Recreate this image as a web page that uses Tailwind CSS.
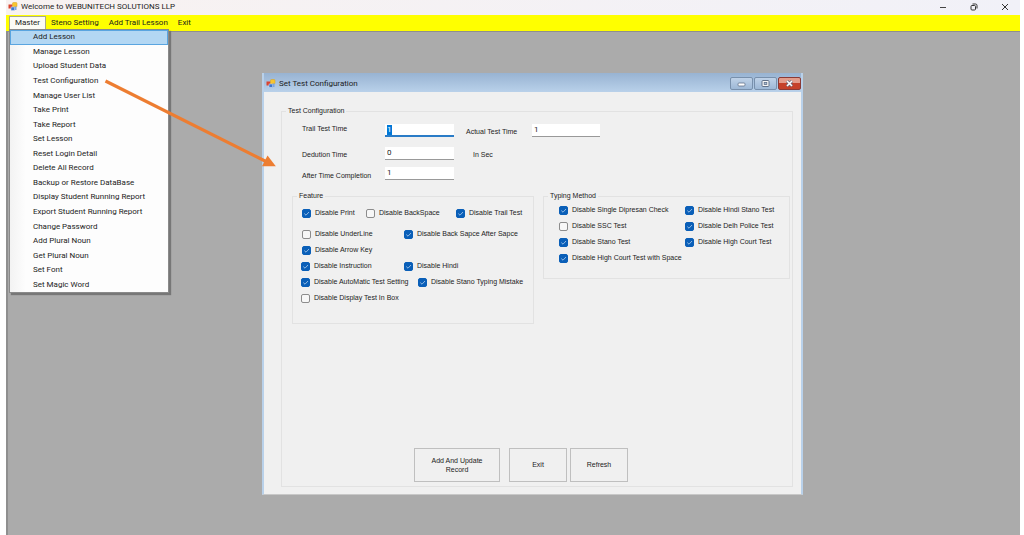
<!DOCTYPE html>
<html lang="en">
<head>
<meta charset="utf-8">
<title>Welcome to WEBUNITECH SOLUTIONS LLP</title>
<script src="https://cdn.jsdelivr.net/npm/@tailwindcss/browser@4"></script>
</head>
<body class="bg-white font-[Roboto,sans-serif] text-[8px] leading-[10px] text-[#1c1c1c]">
<svg class="hidden">
  <symbol id="app-icon" viewBox="0 0 20 18">
    <rect x="1" y="5" width="8" height="8" fill="#d9432f"/>
    <rect x="9" y="1" width="9" height="9" rx="2" fill="#f7c52f" stroke="#d9a01c"/>
    <rect x="6" y="10" width="7" height="7" fill="#3f78cf" stroke="#dfe8f8"/>
    <rect x="13" y="9" width="4" height="7" fill="#7ba4e2"/>
  </symbol>
  <symbol id="tick" viewBox="0 0 9 9"><path d="M2.3 4.6 4 6.2 7 3" fill="none" stroke="#b5d2ef" stroke-width="0.8"/></symbol>
</svg>
<div class="relative mr-1 ml-1.5 flex min-h-screen flex-col">
  <header class="flex h-[15px] items-center bg-linear-to-r from-[#f8f2f1] to-[#f1f1f8] pb-0.5 pl-0.5">
    <svg class="h-[9px] w-[10px]"><use href="#app-icon"/></svg>
    <h1 class="ml-[3px]">Welcome to WEBUNITECH SOLUTIONS LLP</h1>
    <div class="ml-auto flex gap-[21px] pr-2.5">
      <button aria-label="Minimize"><svg class="size-2.5" viewBox="0 0 10 10"><path d="M2 5.500h6" stroke="#444"/></svg></button>
      <button aria-label="Restore"><svg class="size-2.5" viewBox="0 0 10 10" fill="none" stroke="#333"><rect x="2" y="3.500" width="4.500" height="4.500" rx="1"/><path d="M3.500 2H6.500a1.500 1.500 0 0 1 1.500 1.500V6.500"/></svg></button>
      <button aria-label="Close"><svg class="size-2.5" viewBox="0 0 10 10"><path d="m2 2 6 6M8 2 2 8" stroke="#333"/></svg></button>
    </div>
  </header>
  <nav class="flex h-4 bg-[#ff0] pt-px pl-[3px]">
    <button class="border border-b-0 border-[#a9a98c] bg-[#fbfbf5] px-[5px] pb-0.5">Master</button>
    <button class="px-[5px] pb-0.5">Steno Setting</button>
    <button class="px-[5px] pb-0.5">Add Trail Lesson</button>
    <button class="px-[5px] pb-0.5">Exit</button>
  </nav>
  <main class="grow border-t border-l-2 border-[#8f8f8f] bg-[#ababab]"></main>

  <div id="menu" role="menu" class="absolute top-[29px] left-[3px] flex h-[264px] w-40 flex-col border border-[#8a8a8a] bg-linear-to-r from-[#f3f3f3] from-0% to-[#fdfdfd] to-10% shadow-[2px_2px_1px_#777]"></div>

  <section class="absolute top-[73px] left-64 flex h-[422px] w-[541px] flex-col border-x-2 border-b border-[#b9d1ea] border-b-[#c8c8c8] bg-[#f0f0f0] font-['Liberation_Sans',sans-serif] text-[7px]">
    <header class="flex h-[19px] items-center bg-linear-to-b from-[#98b3d2] to-[#b9d1ea] pt-0.5 pl-0.5">
      <svg class="h-[9px] w-[10px]"><use href="#app-icon"/></svg>
      <h2 class="ml-[3px] font-[Roboto,sans-serif] text-[8px]">Set Test Configuration</h2>
      <div class="ml-auto flex gap-px">
        <button aria-label="Minimize" class="flex h-[13px] w-[23px] items-center justify-center rounded-xs border border-[#7890ac] bg-linear-to-b from-[#bfd2e8] to-[#9db8d6]"><svg class="size-[9px]" viewBox="0 0 9 9"><rect x="1" y="4" width="7" height="3" rx="1" fill="#fff" stroke="#62728a" stroke-width=".8"/></svg></button>
        <button aria-label="Maximize" class="flex h-[13px] w-[23px] items-center justify-center rounded-xs border border-[#7890ac] bg-linear-to-b from-[#bfd2e8] to-[#9db8d6]"><svg class="size-[9px]" viewBox="0 0 9 9"><rect x="1" y="1.5" width="7" height="6" rx="1" fill="#f5f5f5" stroke="#62728a"/><rect x="3.2" y="3.5" width="2.6" height="2" fill="#a9bdd5" stroke="#62728a" stroke-width=".8"/></svg></button>
        <button aria-label="Close" class="flex h-[13px] w-[23px] items-center justify-center rounded-xs border border-[#8a3a36] bg-linear-to-b from-[#e39c8b] from-45% to-[#c5412a] to-50%"><svg class="size-[9px]" viewBox="0 0 9 9"><path d="m2 2 5 5M7 2 2 7" stroke="#666c80" stroke-width="3"/><path d="m2 2 5 5M7 2 2 7" stroke="#fff" stroke-width="1.6"/></svg></button>
      </div>
    </header>
    <form class="flex grow flex-col pt-3.5 pr-2 pb-[7px] pl-[17px]">
      <fieldset class="flex grow flex-col border border-[#e2e2e2]">
        <legend class="ml-1 px-0.5">Test Configuration</legend>
        <div class="mt-2 flex h-[13px] pl-5">
          <label for="trail" class="w-[83px]">Trail Test Time</label>
          <input id="trail" value="1" class="w-[69px] border-b-2 border-[#2a7cc7] bg-white px-0.5 font-[Roboto,sans-serif] text-[8px] outline-none selection:bg-[#0078d7] selection:text-white">
          <label for="actual" class="ml-3 w-[66px] self-end">Actual Test Time</label>
          <input id="actual" value="1" class="w-[68px] border-b border-[#999] bg-white px-0.5 font-[Roboto,sans-serif] text-[8px]">
        </div>
        <div class="mt-2.5 flex h-[13px] pl-5">
          <label for="deduction" class="w-[83px] self-end">Dedution Time</label>
          <input id="deduction" value="0" class="w-[69px] border-b border-[#999] bg-white px-0.5 pb-px font-[Roboto,sans-serif] text-[8px]">
          <span class="ml-[19px] self-end">In Sec</span>
        </div>
        <div class="mt-[7px] flex h-[13px] pl-5">
          <label for="after" class="w-[83px] pt-1">After Time Completion</label>
          <input id="after" value="1" class="w-[69px] border-b border-[#999] bg-white px-0.5 pb-px font-[Roboto,sans-serif] text-[8px]">
        </div>
        <div class="mt-[11px] flex items-start gap-[9px] pr-0.5 pl-2.5">
          <fieldset id="feature" class="h-[133px] w-[242px] shrink-0 border border-[#e2e2e2]">
            <legend class="ml-1 px-0.5">Feature</legend>
          </fieldset>
          <fieldset id="typing" class="h-[88px] grow border border-[#e2e2e2]">
            <legend class="ml-1 px-0.5">Typing Method</legend>
          </fieldset>
        </div>
        <div class="mt-auto mb-1 flex h-[34px] pl-[132px]">
          <button type="button" class="w-[86px] border border-[#bfbfbf] px-2.5 leading-[9px]">Add And Update Record</button>
          <button type="button" class="ml-[9px] w-[58px] border border-[#bfbfbf]">Exit</button>
          <button type="button" class="ml-[3px] w-[58px] border border-[#bfbfbf]">Refresh</button>
        </div>
      </fieldset>
    </form>
  </section>

  <svg class="pointer-events-none absolute top-[76px] left-[96px] h-[96px] w-[180px]" viewBox="102 76 180 96">
    <path d="M105.500 81 266 161.500" stroke="#ed7d31" stroke-width="3.2"/>
    <path d="M267.500 155.500 275.800 166.200 262 166.200Z" fill="#ed7d31"/>
  </svg>
</div>
<script>
const menuItems = ['Add Lesson', 'Manage Lesson', 'Upload Student Data', 'Test Configuration', 'Manage User List', 'Take Print', 'Take Report', 'Set Lesson', 'Reset Login Detail', 'Delete All Record', 'Backup or Restore DataBase', 'Display Student Running Report', 'Export Student Running Report', 'Change Password', 'Add Plural Noun', 'Get Plural Noun', 'Set Font', 'Set Magic Word'];
document.getElementById('menu').innerHTML = menuItems.map((t, i) =>
  `<button role="menuitem" class="flex flex-1 items-center border pl-[22px] whitespace-nowrap ${i ? 'border-transparent' : 'border-[#5aa5e0] bg-[#b3d7f3]'}">${t}</button>`).join('');

// Each row: row classes, then [label, checked, item width class]
const groups = {
  feature: [
    ['mt-1 mb-[5px] pl-[9px]', ['Disable Print', 1, 'w-16'], ['Disable BackSpace', 0, 'w-[90px]'], ['Disable Trail Test', 1, '']],
    ['pl-[9px]', ['Disable UnderLine', 0, 'w-[102px]'], ['Disable Back Sapce After Sapce', 1, '']],
    ['pl-[9px]', ['Disable Arrow Key', 1, '']],
    ['pl-2', ['Disable Instruction', 1, 'w-[103px]'], ['Disable Hindi', 1, '']],
    ['pl-2', ['Disable AutoMatic Test Setting', 1, 'w-[117px]'], ['Disable Stano Typing Mistake', 1, '']],
    ['pl-2', ['Disable Display Test In Box', 0, '']],
  ],
  typing: [
    ['mt-px pl-[15px]', ['Disable Single Dipresan Check', 1, 'w-[126px]'], ['Disable Hindi Stano Test', 1, '']],
    ['pl-[15px]', ['Disable SSC Test', 0, 'w-[126px]'], ['Disable Delh Police Test', 1, '']],
    ['pl-[15px]', ['Disable Stano Test', 1, 'w-[126px]'], ['Disable High Court Test', 1, '']],
    ['pl-[15px]', ['Disable High Court Test with Space', 1, '']],
  ],
};
for (const [id, rows] of Object.entries(groups)) {
  document.getElementById(id).insertAdjacentHTML('beforeend', rows.map(([cls, ...items]) =>
    `<div class="flex h-4 items-center ${cls}">${items.map(([t, on, w]) =>
      `<label class="flex shrink-0 items-center gap-1 whitespace-nowrap ${w}"><span class="grid size-[9px]"><input type="checkbox" ${on ? 'checked' : ''} class="size-[9px] appearance-none rounded-xs border border-[#8c8c8c] bg-[#f7f7f7] [grid-area:1/1] checked:border-[#0a5fb8] checked:bg-[#0a5fb8]">${on ? '<svg class="pointer-events-none size-[9px] [grid-area:1/1]"><use href="#tick"/></svg>' : ''}</span>${t}</label>`).join('')}</div>`).join(''));
}
const trail = document.getElementById('trail');
trail.focus();
trail.select();
</script>
</body>
</html>
